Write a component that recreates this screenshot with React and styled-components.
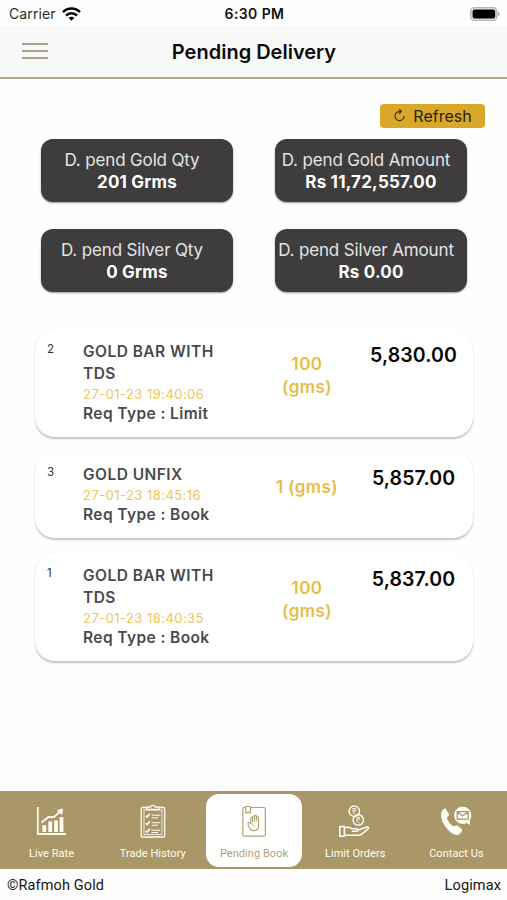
import React, { useState } from "react";
import styled, { createGlobalStyle } from "styled-components";

const GlobalStyle = createGlobalStyle`
  * {
    box-sizing: border-box;
  }
  body {
    margin: 0;
    background: #fff;
    font-family: Inter, "Liberation Sans", sans-serif;
    color: #000;
  }
`

const Screen = styled.div`
  width: 507px;
  height: 900px;
  display: flex;
  flex-direction: column;
  overflow: hidden;
  background: #fefefe;
`

const StatusBar = styled.div`
  height: 26px;
  flex: none;
  display: grid;
  grid-template-columns: 1fr auto 1fr;
  align-items: center;
  padding: 1px 7px 0 9px;
  font-size: 14px;
  line-height: 22px;
  .carrier {
    display: flex;
    align-items: center;
    gap: 6px;
    color: #2b2b2b;
    letter-spacing: 0.1px;
  }
  .time {
    font-weight: 600;
    letter-spacing: 0.4px;
    color: #111;
  }
  .battery {
    justify-self: end;
  }
  svg {
    display: block;
  }
`

const Header = styled.header`
  height: 53px;
  flex: none;
  display: grid;
  grid-template-columns: 1fr auto 1fr;
  align-items: center;
  padding: 0 21px 0 22px;
  background: #f8f8f8;
  border-bottom: 2px solid #b3a67c;
  h1 {
    margin: 0;
    font-size: 20px;
    line-height: 24px;
    font-weight: 600;
    letter-spacing: 0;
    color: #0b0b0b;
  }
`

const MenuButton = styled.button`
  width: 26px;
  height: 16px;
  padding: 0;
  border: 0;
  background: none;
  display: flex;
  flex-direction: column;
  justify-content: space-between;
  margin-bottom: 2px;
  span {
    display: block;
    width: 100%;
    height: 2px;
    background: #aaa388;
  }
`

const Content = styled.main`
  flex: 1;
  display: flex;
  flex-direction: column;
  padding: 25px 34px 0 35px;
`

const RefreshButton = styled.button`
  align-self: flex-end;
  width: 105px;
  height: 24px;
  margin-right: -12px;
  padding: 0 0 1px;
  display: flex;
  align-items: center;
  justify-content: center;
  gap: 7px;
  border: 0;
  border-radius: 4px;
  background: #d9a828;
  font-family: inherit;
  font-size: 16px;
  letter-spacing: 0;
  color: #2a210a;
`

const Summary = styled.div`
  display: grid;
  grid-template-columns: 192px 192px;
  column-gap: 42px;
  row-gap: 27px;
  margin: 11px 0 0 6px;
`

const SummaryCard = styled.div`
  height: 63px;
  padding: 10px 0 0;
  border-radius: 12px;
  background: #3e3c3d;
  box-shadow: 0 1px 2px rgba(0, 0, 0, 0.4);
  text-align: center;
  white-space: nowrap;
  color: #fff;
  line-height: 22px;
  .label {
    font-size: 17px;
    color: #e4e4e4;
    margin-right: 10px;
    letter-spacing: -0.15px;
  }
  .value {
    font-size: 17px;
    font-weight: 700;
    letter-spacing: 0.2px;
  }
`

const OrderList = styled.div`
  display: flex;
  flex-direction: column;
  gap: 15px;
  margin-top: 37px;
`

const OrderCard = styled.div`
  display: grid;
  grid-template-columns: 35px 175px 124px 1fr;
  padding: 12px 0 12px 13px;
  border-radius: 20px;
  background: #fff;
  box-shadow: 0 1.5px 2px rgba(0, 0, 0, 0.24);
`

const OrderNo = styled.div`
  margin-left: -1px;
  font-size: 11.5px;
  line-height: 16px;
  color: #333;
`

const OrderInfo = styled.div`
  width: 150px;
  color: #4a4a4a;
  font-size: 15.5px;
  font-weight: 600;
  line-height: 22px;
  letter-spacing: 0.45px;
  .date {
    font-size: 13px;
    font-weight: 400;
    line-height: 18px;
    letter-spacing: 0.45px;
    color: #eec65a;
  }
  .type {
    line-height: 22px;
    letter-spacing: 0.4px;
  }
`

const Weight = styled.div`
  justify-self: center;
  width: ${({ $wrap }) => ($wrap ? "60px" : "90px")};
  margin-left: -26px;
  padding-top: 12px;
  text-align: center;
  font-size: 17px;
  font-weight: 600;
  line-height: 23px;
  letter-spacing: 0.4px;
  color: #e8bd47;
`

const Price = styled.div`
  margin-left: -28px;
  padding-top: 2px;
  text-align: center;
  font-size: 19.5px;
  font-weight: 600;
  line-height: 24px;
  letter-spacing: 0.1px;
  color: #080808;
`

const TabBar = styled.nav`
  height: 78px;
  flex: none;
  display: grid;
  grid-template-columns: repeat(5, 1fr);
  justify-items: center;
  align-items: center;
  padding-left: 1px;
  background: #a99767;
`

const Tab = styled.button`
  width: 96px;
  height: 73px;
  padding: 10px 0 0;
  display: flex;
  flex-direction: column;
  align-items: center;
  gap: 8px;
  border: 0;
  border-radius: 13px;
  background: ${({ $active }) => ($active ? "#fff" : "transparent")};
  color: ${({ $active }) => ($active ? "#b1a275" : "#fffdf4")};
  font-family: Roboto, "Liberation Sans", sans-serif;
  font-size: 11px;
  line-height: 15px;
  letter-spacing: 0.05px;
  white-space: nowrap;
  svg {
    display: block;
  }
`

const Footer = styled.footer`
  height: 31px;
  flex: none;
  display: flex;
  justify-content: space-between;
  align-items: center;
  padding: 1px 6px 0 7px;
  font-family: Roboto, "Liberation Sans", sans-serif;
  font-size: 14.5px;
  letter-spacing: 0.12px;
  color: #151515;
`

const WifiIcon = () => (
  <svg width="19" height="14" viewBox="0 0 19 14" fill="none" stroke="#000" strokeWidth="2.5">
    <path d="M1 5.2C5.6.3 13.4.3 18 5.2" />
    <path d="M4 8.5c3.1-3.1 7.9-3.1 11 0" />
    <path d="M9.5 13.7 6.6 10.8c1.6-1.5 4.2-1.5 5.8 0z" fill="#000" stroke="none" />
  </svg>
)

const BatteryIcon = () => (
  <svg width="30" height="14" viewBox="0 0 30 14">
    <rect x=".7" y=".7" width="26.2" height="12.6" rx="3.8" fill="#e4e4e4" stroke="#b4b4b4" strokeWidth="1.3" />
    <rect x="2.6" y="2.4" width="22.6" height="9.2" rx="2" fill="#000" />
    <path d="M28 4.8c2.2.8 2.2 3.6 0 4.4z" fill="#aaa" />
  </svg>
)

const RefreshIcon = () => (
  <svg width="13" height="13" viewBox="0 0 13 13" fill="none" stroke="#3a2d0c" strokeWidth="1.2">
    <path d="M7.8 2.6H6.2A4.5 4.5 0 1 0 11 7" />
    <path d="M6.1.3 8.4 2.6 6.1 4.8" />
  </svg>
)

const ChartIcon = () => (
  <svg width="34" height="34" viewBox="0 0 34 34" fill="none" stroke="currentColor">
    <path d="M2.8 3v27H31" strokeWidth="1.8" />
    <path d="M6.5 18.5 13.5 13l5.5.2 7-6.7" strokeWidth="1.8" />
    <path d="m27.7 5-1 5.5-4.1-4.1z" fill="currentColor" />
    <path d="M9.3 28v-6.8M15.2 28V17.5M21 28V16.5M26.5 28V13" strokeWidth="3.8" />
  </svg>
)

const ClipboardIcon = () => (
  <svg width="34" height="34" viewBox="0 0 34 34" fill="none" stroke="currentColor" strokeWidth="1.3">
    <rect x="5.2" y="3.5" width="23.5" height="29.5" rx="1.2" />
    <rect x="8" y="6" width="18" height="24.5" strokeWidth=".8" />
    <path d="M10.7 5.5V3.2h3.8a2.6 2.6 0 0 1 5 0h3.8v2.3z" fill="#a99767" />
    <path d="m9.7 11.7 1.4 1.4 2.8-3.4M9.7 19.2l1.4 1.4 2.8-3.4M9.7 26.7l1.4 1.4 2.8-3.4" strokeWidth="1.5" />
    <path d="M15.7 11.2h8.7M15.7 13.8H22M15.7 18.7h8.7M15.7 21.3H22M15.7 26.2h8.7M15.7 28.5H22" strokeWidth="1" />
  </svg>
)

const BookIcon = () => (
  <svg width="34" height="34" viewBox="0 0 34 34" fill="none" stroke="currentColor" strokeLinejoin="round" strokeLinecap="round">
    <rect x="5.8" y="3.5" width="22.5" height="28.7" rx="1.5" strokeWidth="1.2" />
    <path d="M8.7 2.5h4.8v6.8l-2.4-1.5-2.4 1.5z" fill="#fff" strokeWidth="1.1" />
    <path d="M13.9 19.6v-5.2c0-1.3 1.7-1.3 1.7 0v3-4.3c0-1.4 2-1.4 2 0v3.8-4.5c0-1.4 2-1.4 2 0v4.5-3.3c0-1.3 2-1.3 2 0v8c0 3.2-1.8 5-4.6 5-2.6 0-3.9-1-4.8-2.8l-1.2-3.6c-.5-1.6 1.7-2.5 2.9-.6z" strokeWidth="1.1" />
    <path d="M13.9 19.6c1.8.3 2.7 1.3 2.9 2.6" strokeWidth=".8" />
  </svg>
)

const RupeeCoin = ({ x, y }) => (
  <g transform={`translate(${x} ${y})`}>
    <circle r="5.2" strokeWidth="1.4" />
    <path d="M-2-2.6h4M-2-.9h4M-1.7-2.6C1.6-2.8 1.2.6-1.7.4L1.4 3.2" strokeWidth=".8" />
  </g>
)

const CoinsHandIcon = () => (
  <svg width="34" height="34" viewBox="0 0 34 34" fill="none" stroke="currentColor" strokeLinejoin="round">
    <RupeeCoin x={16.3} y={7.2} />
    <RupeeCoin x={20.3} y={16} />
    <path d="M1.8 22.5h4.6v9.8H1.8z" strokeWidth="1.6" />
    <path d="M6.3 24c3-1.3 5.5-.8 8 .8h4.3c2 0 2 2.5 0 2.5h-4.8M19.8 26.2l8.2-3c2.2-.8 3.2.7 1.9 2l-6.1 5c-1 .8-2 1-3.2 1H6.3" strokeWidth="1.5" />
  </svg>
)

const ContactIcon = () => (
  <svg width="34" height="34" viewBox="0 0 34 34">
    <path d="M2.4 8.2C3.5 5.5 5.3 4 6.5 4.6L9.9 10c.5 1-.1 1.8-1.7 3.2-.6.6 0 2.5 2 5.2 2 2.6 4 4.1 5.2 3.8 1.5-.7 2.3-1.3 3.2-.7l4.3 3.8c1 1-1.2 4.4-3.5 5.5-3.2 1.1-7.8-1.5-11.5-6.2C3.3 19 1 12.5 2.4 8.2z" fill="currentColor" />
    <path d="M23.7 2.7a8.6 8.6 0 1 0 3.7 16.4l3.8 1.9-.6-4.6A8.6 8.6 0 0 0 23.7 2.7z" fill="currentColor" />
    <path d="M18.2 7.7h11v7.4h-11zM18.4 8l5.3 3.8L29 8" fill="none" stroke="#a99767" strokeWidth="1.3" />
  </svg>
)

const summary = [
  { label: "D. pend Gold Qty", value: "201 Grms" },
  { label: "D. pend Gold Amount", value: "Rs 11,72,557.00" },
  { label: "D. pend Silver Qty", value: "0 Grms" },
  { label: "D. pend Silver Amount", value: "Rs 0.00" },
]

const orders = [
  { no: 2, name: "GOLD BAR WITH TDS", date: "27-01-23 19:40:06", type: "Limit", weight: 100, price: "5,830.00" },
  { no: 3, name: "GOLD UNFIX", date: "27-01-23 18:45:16", type: "Book", weight: 1, price: "5,857.00" },
  { no: 1, name: "GOLD BAR WITH TDS", date: "27-01-23 18:40:35", type: "Book", weight: 100, price: "5,837.00" },
]

const tabs = [
  { label: "Live Rate", icon: ChartIcon },
  { label: "Trade History", icon: ClipboardIcon },
  { label: "Pending Book", icon: BookIcon },
  { label: "Limit Orders", icon: CoinsHandIcon },
  { label: "Contact Us", icon: ContactIcon },
]

const App = () => {

  const [active, setActive] = useState("Pending Book");

  return (
    <>
      <GlobalStyle />
      <Screen>
        <StatusBar>
          <div className="carrier">Carrier <WifiIcon /></div>
          <div className="time">6:30 PM</div>
          <div className="battery"><BatteryIcon /></div>
        </StatusBar>
        <Header>
          <MenuButton type="button">
            <span />
            <span />
            <span />
          </MenuButton>
          <h1>Pending Delivery</h1>
        </Header>
        <Content>
          <RefreshButton type="button">
            <RefreshIcon />
            Refresh
          </RefreshButton>
          <Summary>
            {summary.map((item) => (
              <SummaryCard key={item.label}>
                <div className="label">{item.label}</div>
                <div className="value">{item.value}</div>
              </SummaryCard>
            ))}
          </Summary>
          <OrderList>
            {orders.map((order) => (
              <OrderCard key={order.no}>
                <OrderNo>{order.no}</OrderNo>
                <OrderInfo>
                  <div>{order.name}</div>
                  <div className="date">{order.date}</div>
                  <div className="type">Req Type : {order.type}</div>
                </OrderInfo>
                <Weight $wrap={order.weight >= 100}>{order.weight} (gms)</Weight>
                <Price>{order.price}</Price>
              </OrderCard>
            ))}
          </OrderList>
        </Content>
        <TabBar>
          {tabs.map(({ label, icon: Icon }) => (
            <Tab
              key={label}
              type="button"
              $active={label === active}
              onClick={() => setActive(label)}
            >
              <Icon />
              {label}
            </Tab>
          ))}
        </TabBar>
        <Footer>
          <span>©Rafmoh Gold</span>
          <span>Logimax</span>
        </Footer>
      </Screen>
    </>
  )
}

export default App;
